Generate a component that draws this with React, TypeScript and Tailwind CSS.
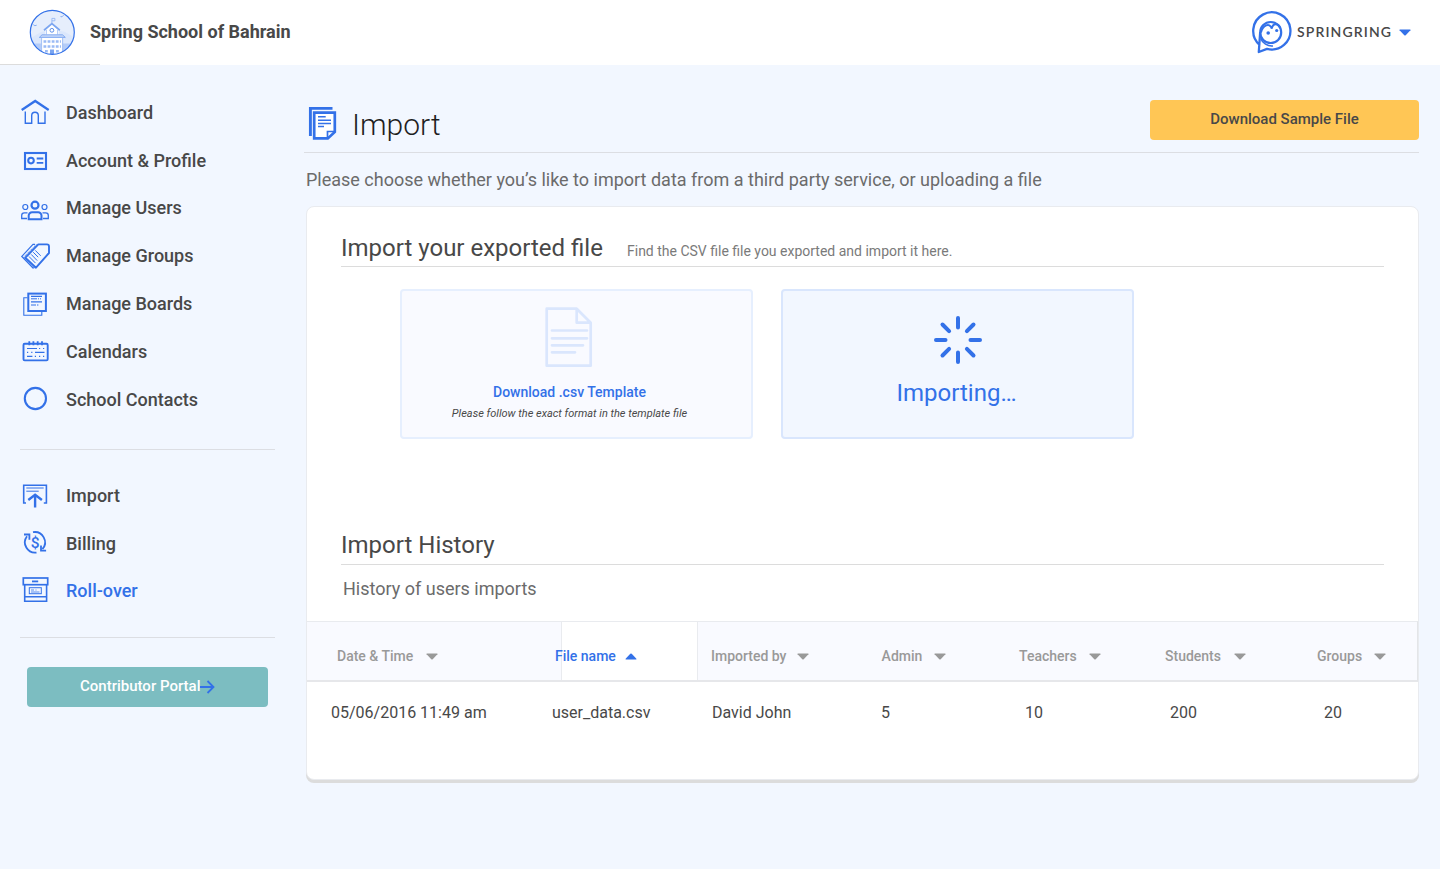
import React from "react";

const BLUE = "#3371e8";

function Svg({ w = 32, h = 32, className = "", children }: { w?: number; h?: number; className?: string; children: React.ReactNode }) {
  return (
    <svg width={w} height={h} viewBox={`0 0 ${w} ${h}`} fill="none" stroke={BLUE} strokeWidth={1.4} className={`shrink-0 ${className}`}>
      {children}
    </svg>
  );
}

const icons: Record<string, React.ReactNode> = {
  home: (
    <Svg>
      <path d="M1.7 13 15.2 4l13.5 9" strokeWidth="2.3" />
      <path d="M5.3 14.5v11.8h6.4v-7.8a3.3 3.3 0 0 1 6.6 0v7.8H25V14.5" strokeWidth="1.4" />
    </Svg>
  ),
  account: (
    <Svg>
      <rect x="5" y="8" width="21" height="16" strokeWidth="2.1" />
      <circle cx="11" cy="15.6" r="2.8" strokeWidth="2" />
      <path d="M16.7 13.5h6.6M16.7 17.8h6.6" strokeWidth="1.8" />
    </Svg>
  ),
  users: (
    <Svg>
      <circle cx="15" cy="12.2" r="3.5" strokeWidth="2.2" />
      <path d="M8.7 26.2v-3.6a3.4 3.4 0 0 1 3.4-3.4h6a3.4 3.4 0 0 1 3.4 3.4v3.6z" strokeWidth="2" />
      <circle cx="5.3" cy="14" r="2.5" strokeWidth="1.2" />
      <circle cx="24.5" cy="14" r="2.5" strokeWidth="1.2" />
      <path d="M7 25.5H1.700V22.500a2.600 2.600 0 0 1 2.600-2.600H7.500M23 25.500h5.300V22.500a2.600 2.600 0 0 0-2.600-2.600H22.500" strokeWidth="1.3" />
    </Svg>
  ),
  groups: (
    <Svg>
      <path d="M18.300 4.400H27q2 0 2 2v6.600L16 27.700 5.300 17.700z" strokeWidth="1.900" strokeLinejoin="round" />
      <path d="M15 4.400h-2L1.700 16.500 13 28l1.600-.6" strokeWidth="1.100" />
      <path d="M16.400 4.400 3.600 17.200 14 27.600" strokeWidth=".9" strokeDasharray="1.400 .8" />
      <path d="m9 16.500 6.500 6.600M11.200 14.400l6 6.200M13.200 12.200l5 5M15.300 10.400l5.400 5.400" strokeWidth="1" />
    </Svg>
  ),
  boards: (
    <Svg>
      <path d="M7.500 9.700H3.800v17.500h18V24" strokeWidth="1.100" />
      <rect x="8.300" y="5.600" width="17.600" height="17.400" strokeWidth="2" />
      <path d="M11 8.400h11M11 13.800h11" strokeWidth="1.200" />
      <path d="M11 10.800h6m1 0h1m1 0h1M11 17h5m1 0h1.400" strokeWidth="1" />
    </Svg>
  ),
  calendar: (
    <Svg>
      <rect x="3.500" y="7.800" width="24.200" height="16.600" rx="1.200" strokeWidth="1.900" />
      <path d="M9.300 5.200v4M13.400 5.200v4M17.700 5.200v4M22 5.200v4" strokeWidth="1.800" />
      <path d="M7 12.500h10m2 0h1.200m2.800 0h1.200M7 16.400h1.200m3 0h1.200m2.600 0h9.500M7 20.400h5.400m2.400 0H16m3 0h1.200m2.800 0h1.200" strokeWidth="1.200" />
    </Svg>
  ),
  contacts: (
    <Svg>
      <circle cx="15.400" cy="14.500" r="10.600" strokeWidth="2.100" />
    </Svg>
  ),
  import: (
    <Svg>
      <path d="M6 23H3.700V5.200h22.700V23H23.800" strokeWidth="1.600" />
      <path d="M6.300 8h17.400M6.300 11.200h12.400" strokeWidth="1" />
      <path d="M15.100 27.500V15.500M8.300 20l6.800-5.200 6.800 5.200" strokeWidth="2.400" />
    </Svg>
  ),
  billing: (
    <Svg>
      <path d="M16.500 24.600A10.300 10.300 0 0 1 7 8.200M13 4.200a10.300 10.300 0 0 1 9.400 17" strokeWidth="1.800" />
      <path d="M4 6.500h5.400v5.200M26.100 22.600H21v-5.200" strokeWidth="1.800" />
      <text x="15.100" y="19.800" textAnchor="middle" fontFamily="Roboto" fontSize="15.500" fontWeight="500" fill={BLUE} stroke="none">$</text>
    </Svg>
  ),
  rollover: (
    <Svg>
      <rect x="3.300" y="3" width="24.400" height="6.700" strokeWidth="1.700" />
      <path d="M4.700 9.600v16.700h21.900V9.600M4.700 21.800h21.900" strokeWidth="1.600" />
      <path d="M12 6.400h6.200" strokeWidth="1.800" />
      <rect x="9.300" y="12.700" width="12" height="6" strokeWidth="1" />
      <path d="M11 15h3M11 17h8.500M15.500 15h1" strokeWidth=".8" />
    </Svg>
  ),
};

function NavItem({ icon, label, active = false }: { icon: string; label: string; active?: boolean }) {
  return (
    <a className={`flex h-[47.83px] items-center gap-3.5 pl-5 text-[18px] font-medium ${active ? "text-[#3371e8]" : "text-[#484848]"}`}>
      {icons[icon]}
      <span className="pb-[1.2px]">{label}</span>
    </a>
  );
}

function Caret({ up = false, className = "text-[#999999]" }: { up?: boolean; className?: string }) {
  return (
    <svg width="12" height="7" viewBox="0 0 12 7" className={`shrink-0 ${className}`}>
      {up ? <path d="M.6 6.600V5.800L5.300.8Q6 .2 6.700.8l4.700 5v.8z" fill="currentColor" /> : <path d="M.6.500h10.800v.8L6.700 6.200q-.7.6-1.400 0L.6 1.300z" fill="currentColor" />}
    </svg>
  );
}

function SchoolLogo() {
  return (
    <Svg w={48} h={48} className="mt-0.5">
      <defs>
        <clipPath id="badge"><circle cx="23.300" cy="23.300" r="22" /></clipPath>
      </defs>
      <g clipPath="url(#badge)" stroke="none">
        <rect width="48" height="48" fill="#e6eefc" />
        <path d="M0 30 12 23l12-3 12 3 12 7v18H0z" fill="#dbe7fc" />
        <path d="M0 34.500h48V48H0z" fill="#b4ccf8" />
        <path d="M16 21l7-6.500 7 6.500v5H16z" fill="#fff" />
        <path d="M12.300 28h21.400v18H12.300z" fill="#fff" />
      </g>
      <path d="m15 21.200 7.900-6.600 7.900 6.600" stroke="#7ba5f0" strokeWidth="1.800" />
      <path d="M10.300 28.400 13 25.800h20.500l2.800 2.600z" fill="#c3d6f9" stroke="#7ba5f0" strokeWidth=".9" />
      <path d="M17.300 21v4.500M28.700 21v4.500M12.600 29v14M33.600 29v14M22.900 14.500V9.400h3v2.400h-3" stroke="#8db1f3" strokeWidth=".8" />
      <circle cx="22.900" cy="21.300" r="1.900" stroke="#5b8eea" strokeWidth="1" />
      <path d="M14.500 32.500h17.500M14.500 37.500h17.500M16 42.300h4M27 42.300h4" stroke="#9bbbf5" strokeWidth="2.600" strokeDasharray="2.800 1.300" />
      <path d="M21 40.500h4V45h-4z" fill="#7ba5f0" stroke="none" />
      <path d="m31.500 7.600 1.500.2 1.600-1.600M4.300 15.700l1.600 1 1.800-.5" stroke="#7ba5f0" strokeWidth=".9" />
      <circle cx="23.300" cy="23.300" r="22" strokeWidth="1.200" />
    </Svg>
  );
}

function SpringLogo() {
  return (
    <Svg w={44} h={46}>
      <path d="M10 36.300A18.600 18.600 0 1 1 17 39.900L8.800 43 10.200 23" strokeWidth="2.300" strokeLinejoin="round" />
      <circle cx="20.700" cy="23.500" r="10.500" strokeWidth="2.200" />
      <path d="M11 23.500C12.500 17 19.500 12.500 21.800 19.600 22.800 13.500 28.500 14 30.600 19.500" strokeWidth="1.900" />
      <circle cx="18.200" cy="24" r="1.800" fill={BLUE} stroke="none" />
      <circle cx="26.700" cy="21.500" r="1.600" fill={BLUE} stroke="none" />
      <path d="M11 30c1.500 4 6.500 7.500 12 7" strokeWidth="1.600" />
    </Svg>
  );
}

const columns = [
  { name: "Date & Time", value: "05/06/2016 11:49 am", head: "pl-[30px]", label: "w-[89px]", cell: "pl-6" },
  { name: "File name", value: "user_data.csv", head: "", label: "-ml-[7px] w-[70px]", cell: "-ml-[9px]", active: true },
  { name: "Imported by", value: "David John", head: "pl-[13px]", label: "w-[86px]", cell: "pl-3.5" },
  { name: "Admin", value: "5", head: "pl-[9.6px]", label: "w-[52.4px]", cell: "pl-[9px]" },
  { name: "Teachers", value: "10", head: "pl-[9px]", label: "w-[70px]", cell: "pl-[15px]" },
  { name: "Students", value: "200", head: "pl-[9px]", label: "w-[69px]", cell: "pl-3.5" },
  { name: "Groups", value: "20", head: "pl-[9px]", label: "w-[57px]", cell: "pl-4" },
];

export default function App() {
  return (
    <div className="flex h-[869px] w-[1440px] flex-col overflow-hidden bg-[#f2f7ff] font-['Roboto',sans-serif] text-[#484848]">
      <header className="flex h-[65px] shrink-0 flex-col bg-white">
        <div className="flex h-16 items-center justify-between pl-[29px] pr-[29px]">
          <div className="flex items-center gap-[13px]">
            <SchoolLogo />
            <span className="pb-0.5 text-[18px] font-bold">Spring School of Bahrain</span>
          </div>
          <div className="flex items-center">
            <SpringLogo />
            <span className="ml-[3px] w-[102px] whitespace-nowrap pb-px font-['Lato',sans-serif] text-[14px] font-semibold tracking-[1.120px]">SPRINGRING</span>
            <Caret className="text-[#3371e8]" />
          </div>
        </div>
        <div className="h-px w-[100px] bg-[#dcdcdc]" />
      </header>

      <div className="flex grow">
        <aside className="w-[306px] shrink-0 pt-6">
          <nav>
            <NavItem icon="home" label="Dashboard" />
            <NavItem icon="account" label="Account & Profile" />
            <NavItem icon="users" label="Manage Users" />
            <NavItem icon="groups" label="Manage Groups" />
            <NavItem icon="boards" label="Manage Boards" />
            <NavItem icon="calendar" label="Calendars" />
            <NavItem icon="contacts" label="School Contacts" />
          </nav>
          <div className="mb-[22.1px] ml-5 mt-[25px] h-px w-[255px] bg-[#dcdee3]" />
          <nav>
            <NavItem icon="import" label="Import" />
            <NavItem icon="billing" label="Billing" />
            <NavItem icon="rollover" label="Roll-over" active />
          </nav>
          <div className="ml-5 mt-[21.6px] h-px w-[255px] bg-[#dcdee3]" />
          <button className="ml-[27px] mt-[29px] flex h-10 w-[241px] items-center rounded-[4px] bg-[#7cbdc1] pl-[53px] text-[15px] font-medium text-white">
            <span className="-mt-0.5">Contributor Portal</span>
            <svg width="15" height="14" viewBox="0 0 15 14" fill="none" stroke={BLUE} strokeWidth="1.800" className="shrink-0">
              <path d="M0 7h13.500M7.500 1l6 6-6 6" />
            </svg>
          </button>
        </aside>

        <main className="w-[1113px] pt-[35px]">
          <div className="-ml-0.5 flex h-[53px] justify-between border-b border-[#dcdee3] pl-1">
            <div className="flex gap-3">
              <Svg w={32} h={36} className="mt-1.5">
                <path d="M24.500 2.400H2.400V30" strokeWidth="2.900" />
                <path d="M6.200 6.700h20.600v19.200l-7 6.500H6.200z" strokeWidth="2.700" fill="#fff" />
                <path d="M19.500 32v-6.500h7" strokeWidth="1.700" />
                <path d="M10 10.800h7.700M10 14.200h13M10 17.400h13M10 20.400h6" strokeWidth="1.500" />
              </Svg>
              <h1 className="h-[50px] text-[30px] font-light leading-[50px] text-[#1f1f1f]">Import</h1>
            </div>
            <button className="h-10 w-[269px] rounded-[4px] bg-[#ffc655] pb-px text-[15px] font-medium text-[#484848]">Download Sample File</button>
          </div>
          <p className="mt-[15px] h-[38px] text-[18px] leading-6 text-[#6b6b6b]">Please choose whether you’s like to import data from a third party service, or uploading a file</p>

          <section className="h-[574px] overflow-hidden rounded-lg border border-[#e9ebef] bg-white shadow-[0_3px_0_#dcdcdc]">
            <div className="mx-[34px] flex h-[60px] items-end border-b border-[#dcdcdc]">
              <h2 className="w-[286px] text-[24px] leading-[36px]">Import your exported file</h2>
              <span className="text-[14px] leading-[29px] text-[#7a7a7a]">Find the CSV file file you exported and import it here.</span>
            </div>
            <div className="ml-[93px] mt-[22px] flex gap-7">
              <div className="flex h-[150px] w-[353px] flex-col items-center rounded-[4px] border-2 border-[#e6effe] bg-[#f9faff] pt-4">
                <Svg w={48} h={61} className="-ml-4">
                  <g stroke="#dae6fd" strokeWidth="2.700" strokeLinejoin="round">
                    <path d="M1.700 1.700h30l14 14v43h-44zM31.700 1.700v14h14" />
                    <path d="M7 23.500h35M7 31.300h35M7 38.300h31M7 45.300h23" strokeLinecap="round" />
                  </g>
                </Svg>
                <span className="-ml-3.5 mt-[14px] text-[14px] font-medium leading-5 text-[#3371e8]">Download .csv Template</span>
                <span className="-ml-3.5 mt-1 text-[11px] italic leading-4">Please follow the exact format in the template file</span>
              </div>
              <div className="flex h-[150px] w-[353px] flex-col items-center rounded-[4px] border-2 border-[#d9e6fd] bg-[#f2f7ff] pt-[25px]">
                <Svg w={48} h={48}>
                  <path d="M24 2v9.500M24 36.500V46M2 24h9.500M36.500 24H46M8.500 8.500l6.600 6.600M32.900 32.900l6.600 6.600M39.500 8.500l-6.600 6.600M15.100 32.900l-6.600 6.600" strokeWidth="4" strokeLinecap="round" />
                </Svg>
                <span className="-ml-0.5 mt-[13px] text-[24px] leading-8 text-[#3371e8]">Importing…</span>
              </div>
            </div>
            <h2 className="mx-[34px] mt-[88px] h-[38px] border-b border-[#dcdcdc] text-[24px] leading-[36px]">Import History</h2>
            <p className="ml-9 h-14 text-[18px] leading-[48px] text-[#6b6b6b]">History of users imports</p>
            <div className="grid h-[61px] grid-cols-[254px_137px_174px_138px_146px_152px_109px] border-b-2 border-r border-t border-b-[#e6e7ea] border-r-[#e3e5e8] border-t-[#e9ebef] text-[14px] font-medium text-[#999999]">
              {columns.map((c) => (
                <div key={c.name} className={`flex items-center pt-2.5 ${c.active ? "border-x border-[#e9ebef] bg-white text-[#3371e8]" : "bg-[#f9faff]"} ${c.head}`}>
                  <span className={`shrink-0 whitespace-nowrap ${c.label}`}>{c.name}</span>
                  <Caret up={c.active} className={c.active ? "text-[#3371e8]" : "text-[#999999]"} />
                </div>
              ))}
            </div>
            <div className="grid h-[62px] grid-cols-[254px_137px_174px_138px_146px_152px_109px] items-center text-[16px]">
              {columns.map((c) => (
                <span key={c.name} className={`whitespace-nowrap ${c.cell}`}>{c.value}</span>
              ))}
            </div>
          </section>
        </main>
      </div>
    </div>
  );
}
